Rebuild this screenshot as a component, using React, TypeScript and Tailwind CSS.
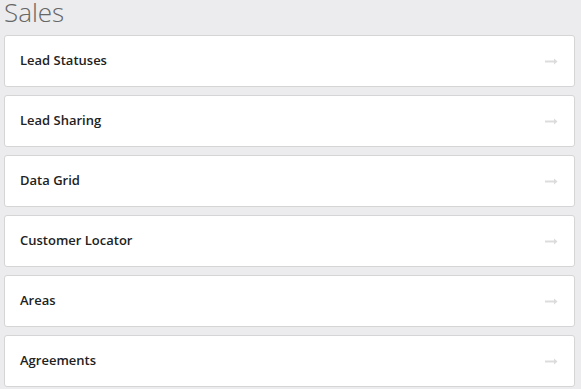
import React from "react";

const items = ["Lead Statuses", "Lead Sharing", "Data Grid", "Customer Locator", "Areas", "Agreements"];

function Arrow() {
  return (
    <svg width="13" height="7" viewBox="0 0 13 7" className="shrink-0">
      <line x1="0" y1="3.5" x2="10" y2="3.5" stroke="#dcdcdc" strokeWidth="2" />
      <path d="M9 0.5 L12.5 3.5 L9 6.5 Z" fill="#dcdcdc" />
    </svg>
  );
}

export default function App() {
  return (
    <div className="w-[581px] h-[389px] overflow-hidden bg-[#ececee] pl-[4px] pr-[6px]" style={{ fontFamily: '"Open Sans", sans-serif' }}>
      <h1 className="text-[26px] leading-[24px] font-light text-[#666] h-[35px]">Sales</h1>
      <div className="flex flex-col gap-[8px]">
        {items.map((t) => (
          <div key={t} className="h-[52px] bg-white border border-[#d5d5d5] rounded-[3px] flex items-center justify-between pl-[15px] pr-[16px]">
            <span className="text-[13px] font-semibold text-[#222]">{t}</span>
            <Arrow />
          </div>
        ))}
      </div>
    </div>
  );
}
